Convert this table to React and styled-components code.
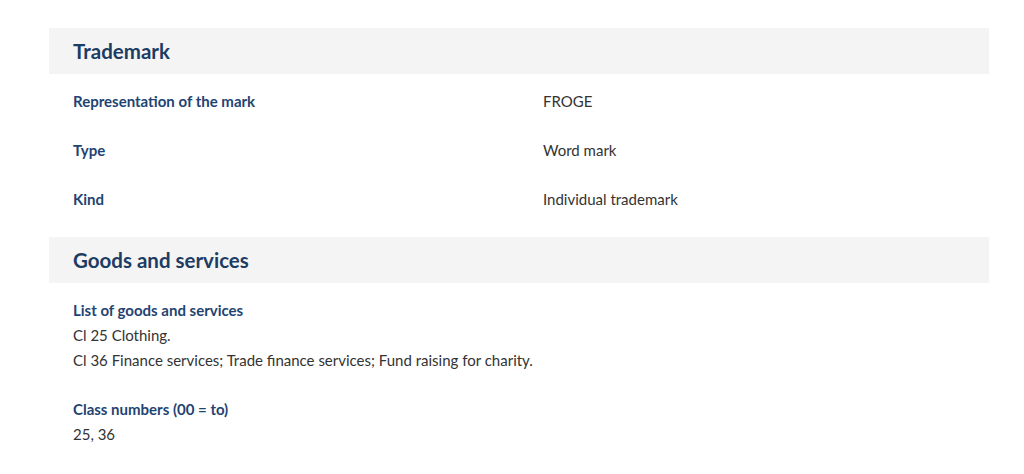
import React from "react";
import styled, { createGlobalStyle } from "styled-components";

const Global = createGlobalStyle`
  html, body { margin: 0; padding: 0; background: #fff; }
  body { font-family: "Lato", "Open Sans", sans-serif; }
`;

const Page = styled.div`
  padding: 28px 35px 0 49px;
  width: 940px;
`;

const Section = styled.section`
  display: flex;
  flex-direction: column;
`;

const SectionHeader = styled.h2`
  margin: 0;
  height: 46px;
  display: flex;
  align-items: center;
  padding: 0 24px;
  background: #f4f4f4;
  color: #1d3c63;
  font-size: 20.5px;
  font-weight: 700;
`;

const Rows = styled.div`
  padding: 2px 0 14px;
`;

const Row = styled.div`
  display: grid;
  grid-template-columns: 50% 50%;
  height: 49px;
  align-items: center;
`;

const Label = styled.div`
  padding: 0 24px;
  color: #1f4472;
  font-size: 15px;
  font-weight: 700;
`;

const Value = styled.div`
  padding: 0 24px;
  color: #333;
  font-size: 15px;
`;

const Block = styled.div`
  padding: ${(p) => p.$top}px 24px 0;
  display: flex;
  flex-direction: column;
  line-height: 25px;
  font-size: 15px;
`;

const BlockTitle = styled.div`
  color: #1f4472;
  font-weight: 700;
`;

const BlockText = styled.div`
  color: #333;
`;

export default function App() {
  return (
    <>
      <Global />
      <Page>
        <Section>
          <SectionHeader>Trademark</SectionHeader>
          <Rows>
            <Row>
              <Label>Representation of the mark</Label>
              <Value>FROGE</Value>
            </Row>
            <Row>
              <Label>Type</Label>
              <Value>Word mark</Value>
            </Row>
            <Row>
              <Label>Kind</Label>
              <Value>Individual trademark</Value>
            </Row>
          </Rows>
        </Section>
        <Section>
          <SectionHeader>Goods and services</SectionHeader>
          <Block $top={15}>
            <BlockTitle>List of goods and services</BlockTitle>
            <BlockText>Cl 25 Clothing.</BlockText>
            <BlockText>Cl 36 Finance services; Trade finance services; Fund raising for charity.</BlockText>
          </Block>
          <Block $top={24}>
            <BlockTitle>Class numbers (00 = to)</BlockTitle>
            <BlockText>25, 36</BlockText>
          </Block>
        </Section>
      </Page>
    </>
  );
}
